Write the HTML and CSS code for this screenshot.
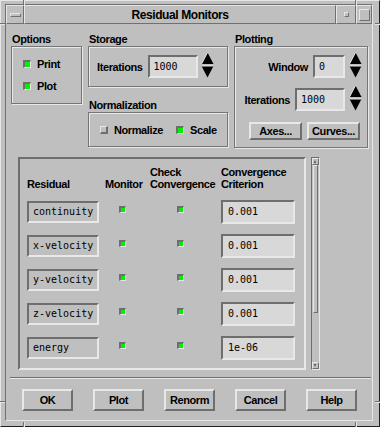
FILE: index.html
```html
<!DOCTYPE html>
<html lang="en">
<head>
  <meta charset="UTF-8">
  <title>Residual Monitors</title>
  <link rel="stylesheet" href="styles.css">
</head>
<body>
  <div class="window">
    <span class="notch notch-v notch-tl"></span>
    <span class="notch notch-v notch-tr"></span>
    <span class="notch notch-v notch-bl"></span>
    <span class="notch notch-v notch-br"></span>
    <span class="notch notch-h notch-lt"></span>
    <span class="notch notch-h notch-rt"></span>
    <span class="notch notch-h notch-lb"></span>
    <span class="notch notch-h notch-rb"></span>

    <div class="frame">
      <div class="titlebar">
        <div class="tb-btn tb-menu"><span class="menu-bar"></span></div>
        <div class="tb-btn tb-title">Residual Monitors</div>
        <div class="tb-btn tb-min"><span class="min-box"></span></div>
        <div class="tb-btn tb-max"><span class="max-box"></span></div>
      </div>

      <div class="client">
        <div class="top-row">
          <div class="group options">
            <div class="group-title">Options</div>
            <div class="group-box options-box">
              <div class="check"><span class="cb on"></span>Print</div>
              <div class="check"><span class="cb on"></span>Plot</div>
            </div>
          </div>

          <div class="storage-col">
            <div class="group">
              <div class="group-title">Storage</div>
              <div class="group-box storage-box">
                <span class="lbl">Iterations</span>
                <div class="field w50">1000</div>
                <svg class="spin" width="13" height="26" viewBox="0 0 13 26">
                  <polygon points="6.5,0.5 12.5,12 0.5,12" fill="#000"/>
                  <line x1="6.5" y1="0.5" x2="0.5" y2="12" stroke="#e8e8e8"/>
                  <polygon points="0.5,14 12.5,14 6.5,25.5" fill="#000"/>
                  <line x1="0.5" y1="14" x2="12.5" y2="14" stroke="#e8e8e8"/>
                </svg>
              </div>
            </div>
            <div class="group norm">
              <div class="group-title">Normalization</div>
              <div class="group-box norm-box">
                <div class="check"><span class="cb"></span>Normalize</div>
                <div class="check"><span class="cb on"></span>Scale</div>
              </div>
            </div>
          </div>

          <div class="group plotting">
            <div class="group-title">Plotting</div>
            <div class="group-box plot-box">
              <div class="plot-row">
                <span class="lbl">Window</span>
                <div class="field w32">0</div>
                <svg class="spin" width="13" height="26" viewBox="0 0 13 26">
                  <polygon points="6.5,0.5 12.5,12 0.5,12" fill="#000"/>
                  <line x1="6.5" y1="0.5" x2="0.5" y2="12" stroke="#e8e8e8"/>
                  <polygon points="0.5,14 12.5,14 6.5,25.5" fill="#000"/>
                  <line x1="0.5" y1="14" x2="12.5" y2="14" stroke="#e8e8e8"/>
                </svg>
              </div>
              <div class="plot-row">
                <span class="lbl">Iterations</span>
                <div class="field w50">1000</div>
                <svg class="spin" width="13" height="26" viewBox="0 0 13 26">
                  <polygon points="6.5,0.5 12.5,12 0.5,12" fill="#000"/>
                  <line x1="6.5" y1="0.5" x2="0.5" y2="12" stroke="#e8e8e8"/>
                  <polygon points="0.5,14 12.5,14 6.5,25.5" fill="#000"/>
                  <line x1="0.5" y1="14" x2="12.5" y2="14" stroke="#e8e8e8"/>
                </svg>
              </div>
              <div class="plot-buttons">
                <button class="btn small">Axes...</button>
                <button class="btn small">Curves...</button>
              </div>
            </div>
          </div>
        </div>

        <div class="residuals">
          <div class="res-panel">
            <div class="res-grid">
              <div class="head">Residual</div>
              <div class="head">Monitor</div>
              <div class="head">Check<br>Convergence</div>
              <div class="head">Convergence<br>Criterion</div>

              <div class="name">continuity</div>
              <span class="mini c2"></span>
              <span class="mini c3"></span>
              <div class="field crit">0.001</div>

              <div class="name">x-velocity</div>
              <span class="mini c2"></span>
              <span class="mini c3"></span>
              <div class="field crit">0.001</div>

              <div class="name">y-velocity</div>
              <span class="mini c2"></span>
              <span class="mini c3"></span>
              <div class="field crit">0.001</div>

              <div class="name">z-velocity</div>
              <span class="mini c2"></span>
              <span class="mini c3"></span>
              <div class="field crit">0.001</div>

              <div class="name">energy</div>
              <span class="mini c2"></span>
              <span class="mini c3"></span>
              <div class="field crit">1e-06</div>
            </div>
          </div>
          <div class="scrollbar">
            <span class="sb-arrow up"></span>
            <span class="sb-thumb"></span>
            <span class="sb-rest"></span>
            <span class="sb-arrow down"></span>
          </div>
        </div>

        <div class="separator"></div>

        <div class="actions">
          <button class="btn">OK</button>
          <button class="btn">Plot</button>
          <button class="btn">Renorm</button>
          <button class="btn">Cancel</button>
          <button class="btn">Help</button>
        </div>
      </div>
    </div>
  </div>
</body>
</html>
```

FILE: styles.css
```css
* {
  box-sizing: border-box;
}

body {
  margin: 0;
  font-family: "Liberation Sans", Arial, sans-serif;
  font-size: 11px;
  font-weight: bold;
  letter-spacing: -0.4px;
  color: #000;
  background: #bfbfbf;
}

/* window frame */
.window {
  position: relative;
  width: 380px;
  height: 427px;
  background: #bfbfbf;
  border: 1px solid;
  border-color: #e6e6e6 #202020 #202020 #e6e6e6;
  padding: 3px 6px 5px 4px;
}

.frame {
  height: 100%;
  display: flex;
  flex-direction: column;
  border: 1px solid;
  border-color: #707070 #e6e6e6 #e6e6e6 #707070;
}

.notch {
  position: absolute;
}

.notch-v {
  width: 2px;
  height: 5px;
  border-left: 1px solid #707070;
  border-right: 1px solid #e6e6e6;
}

.notch-h {
  width: 5px;
  height: 2px;
  border-top: 1px solid #707070;
  border-bottom: 1px solid #e6e6e6;
}

.notch-tl { left: 22px; top: -1px; }
.notch-tr { left: 354px; top: -1px; }
.notch-bl { left: 22px; bottom: -1px; }
.notch-br { left: 354px; bottom: -1px; }
.notch-lt { left: -1px; top: 22px; }
.notch-rt { right: -1px; top: 22px; }
.notch-lb { left: -1px; top: 400px; }
.notch-rb { right: -1px; top: 400px; }

/* title bar */
.titlebar {
  display: flex;
  height: 19px;
}

.tb-btn {
  display: flex;
  align-items: center;
  justify-content: center;
  border: 1px solid;
  border-color: #e6e6e6 #707070 #707070 #e6e6e6;
}

.tb-menu { width: 18px; }
.tb-title { flex: 1; font-size: 12px; }
.tb-min { width: 20px; }
.tb-max { width: 16px; }

.menu-bar {
  width: 11px;
  height: 4px;
  border: 1px solid;
  border-color: #e6e6e6 #707070 #707070 #e6e6e6;
}

.min-box {
  width: 5px;
  height: 5px;
  border: 1px solid;
  border-color: #e6e6e6 #707070 #707070 #e6e6e6;
}

.max-box {
  width: 11px;
  height: 12px;
  border: 1px solid;
  border-color: #e6e6e6 #707070 #707070 #e6e6e6;
}

/* client */
.client {
  flex: 1;
  padding: 8px 0 0 5px;
}

.top-row {
  display: flex;
  gap: 6px;
  align-items: flex-start;
}

.group-title {
  height: 14px;
  line-height: 14px;
  padding-left: 1px;
}

.group-box {
  border: 1px solid #767676;
  box-shadow: inset 1px 1px 0 #e8e8e8, 1px 1px 0 #e8e8e8;
}

.options { width: 71px; }
.storage-col { width: 140px; }
.plotting { width: 134px; }

.options-box {
  height: 58px;
  padding: 6px 0 0 11px;
}

.check {
  display: flex;
  align-items: center;
  gap: 6px;
  height: 22px;
}

.cb {
  width: 8px;
  height: 8px;
  background: #bfbfbf;
  border-style: solid;
  border-width: 1px 2px 2px 1px;
  border-color: #e8e8e8 #6e6e6e #6e6e6e #e8e8e8;
}

.cb.on {
  background: #00f000;
  border-width: 2px 1px 1px 2px;
  border-color: #6e6e6e #e8e8e8 #e8e8e8 #6e6e6e;
}

.storage-box {
  height: 41px;
  display: flex;
  align-items: center;
  padding-left: 8px;
}

.lbl {
  margin-right: 5px;
}

.field {
  height: 23px;
  background: #d8d8d8;
  border: 2px solid;
  border-color: #6e6e6e #e8e8e8 #e8e8e8 #6e6e6e;
  font-family: "DejaVu Sans Mono", "Liberation Mono", monospace;
  font-weight: normal;
  font-size: 10px;
  letter-spacing: 0;
  line-height: 19px;
  padding-left: 4px;
}

.w50 { width: 50px; }
.w32 { width: 32px; }

.spin {
  margin-left: 3px;
  margin-bottom: 3px;
}

.norm {
  margin-top: 11px;
}

.norm-box {
  height: 35px;
  display: flex;
  align-items: center;
  padding-left: 11px;
  gap: 13px;
}

.plot-box {
  height: 102px;
  padding: 8px 5px 0 0;
}

.plot-row {
  display: flex;
  align-items: center;
  justify-content: flex-end;
  height: 23px;
  margin-bottom: 10px;
}

.plot-row .spin {
  margin-left: 4px;
}

.plot-buttons {
  display: flex;
  justify-content: flex-end;
  gap: 5px;
  padding-right: 2px;
  margin-top: 11px;
}

/* buttons */
.btn {
  width: 51px;
  height: 22px;
  padding: 0;
  background: #bfbfbf;
  border: 2px solid;
  border-color: #e8e8e8 #6e6e6e #6e6e6e #e8e8e8;
  font-family: "Liberation Sans", Arial, sans-serif;
  font-size: 11px;
  font-weight: bold;
  letter-spacing: -0.4px;
  color: #000;
}

.btn.small {
  width: 53px;
  height: 18px;
}

/* residual list */
.residuals {
  display: flex;
  gap: 5px;
  margin: 9px 0 0 7px;
}

.res-panel {
  width: 288px;
  height: 213px;
  border: 2px solid;
  border-color: #6e6e6e #e8e8e8 #e8e8e8 #6e6e6e;
  padding: 7px 0 0 7px;
}

.res-grid {
  display: grid;
  grid-template-columns: 72px 39px 65px 74px;
  grid-auto-rows: 24px;
  column-gap: 6px;
  row-gap: 10px;
  align-items: center;
}

.head {
  align-self: end;
  line-height: 12px;
  white-space: nowrap;
}

.name {
  height: 22px;
  border: 2px solid;
  border-color: #6e6e6e #e8e8e8 #e8e8e8 #6e6e6e;
  font-family: "DejaVu Sans Mono", "Liberation Mono", monospace;
  font-weight: normal;
  font-size: 10px;
  letter-spacing: 0;
  line-height: 18px;
  padding-left: 4px;
}

.crit {
  height: 24px;
  line-height: 20px;
  padding-left: 5px;
}

.mini {
  align-self: start;
  margin-top: 6px;
  width: 7px;
  height: 7px;
  background: #00f000;
  border-style: solid;
  border-width: 2px 1px 1px 2px;
  border-color: #6e6e6e #e8e8e8 #e8e8e8 #6e6e6e;
}

.mini.c2 { margin-left: 14px; }
.mini.c3 { margin-left: 27px; }

.scrollbar {
  width: 9px;
  height: 213px;
  display: flex;
  flex-direction: column;
  border: 1px solid;
  border-color: #6e6e6e #e8e8e8 #e8e8e8 #6e6e6e;
}

.sb-arrow {
  height: 7px;
  border: 1px solid;
  border-color: #e8e8e8 #6e6e6e #6e6e6e #e8e8e8;
  position: relative;
}

.sb-arrow.up::after,
.sb-arrow.down::after {
  content: "";
  position: absolute;
  left: 1px;
  border-left: 1.5px solid transparent;
  border-right: 1.5px solid transparent;
}

.sb-arrow.up::after {
  top: 1px;
  border-bottom: 3px solid #505050;
}

.sb-arrow.down::after {
  top: 1px;
  border-top: 3px solid #505050;
}

.sb-thumb {
  height: 148px;
  margin: 0 1px;
  border: 1px solid;
  border-color: #e8e8e8 #6e6e6e #6e6e6e #e8e8e8;
}

.sb-rest {
  flex: 1;
}

.separator {
  margin: 7px 0 0 -1px;
  width: 361px;
  border-top: 1px solid #6e6e6e;
  border-bottom: 1px solid #e8e8e8;
}

.actions {
  display: flex;
  gap: 20px;
  margin-top: 10px;
  padding-left: 11px;
}
```
